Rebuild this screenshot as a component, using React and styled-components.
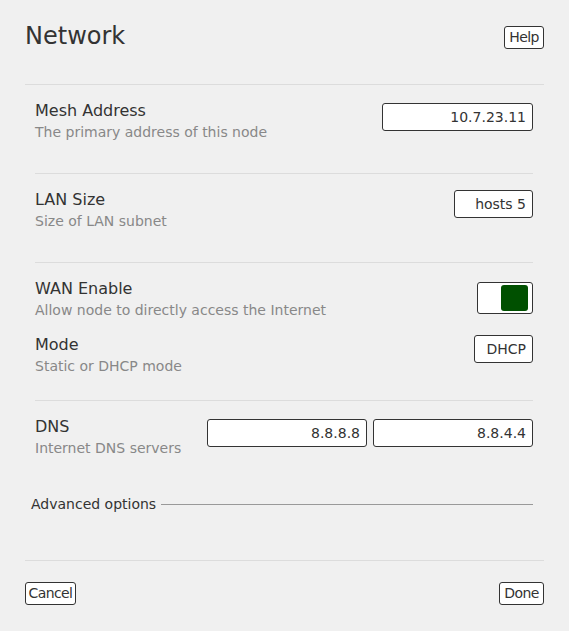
import styled, { createGlobalStyle } from "styled-components";

const GlobalStyle = createGlobalStyle`
  html, body {
    margin: 0;
    padding: 0;
    background: #f0f0f0;
  }
  body {
    font-family: "DejaVu Sans", "Liberation Sans", sans-serif;
    color: #333;
  }
`;

const Page = styled.div`
  padding: 22px 25px 0;
  min-height: 631px;
  box-sizing: border-box;
`;

const Header = styled.div`
  display: flex;
  justify-content: space-between;
  align-items: flex-start;
  padding-bottom: 34px;
  border-bottom: 1px solid #dcdcdc;
`;

const Title = styled.h1`
  margin: 0;
  font-size: 24px;
  line-height: 28px;
  font-weight: normal;
  color: #333;
`;

const Button = styled.button`
  font-family: "DejaVu Sans", sans-serif;
  font-size: 14px;
  letter-spacing: -0.6px;
  line-height: 21px;
  width: ${(p) => p.$w}px;
  height: 23px;
  color: #333;
  background: #fff;
  border: 1px solid #333;
  border-radius: 3px;
  padding: 0;
  text-align: center;
  margin-top: ${(p) => p.$offset || 0}px;
  cursor: pointer;
`;

const Section = styled.div`
  margin: 0 11px 0 10px;
  padding: 16px 0 ${(p) => p.$bottom ?? 32}px;
  border-bottom: ${(p) => (p.$last ? "none" : "1px solid #dcdcdc")};
  display: flex;
  flex-direction: column;
  gap: 16px;
`;

const Row = styled.div`
  display: flex;
  justify-content: space-between;
  align-items: flex-start;
  gap: 12px;
`;

const Info = styled.div`
  display: flex;
  flex-direction: column;
  gap: 2px;
`;

const Label = styled.div`
  font-size: 16px;
  line-height: 20px;
  color: #333;
`;

const Desc = styled.div`
  font-size: 14px;
  line-height: 18px;
  color: #888;
`;

const Inputs = styled.div`
  display: flex;
  gap: 6px;
  margin-top: 2px;
`;

const Input = styled.input`
  width: ${(p) => p.$width}px;
  height: 28px;
  box-sizing: border-box;
  border: 1px solid #333;
  border-radius: 3px;
  background: #fff;
  font-family: "DejaVu Sans", sans-serif;
  font-size: 14px;
  color: #333;
  text-align: right;
  padding: 0 6px;
  outline: none;
`;

const Select = styled.div`
  height: 28px;
  box-sizing: border-box;
  border: 1px solid #333;
  border-radius: 3px;
  background: #fff;
  font-size: 14px;
  line-height: 26px;
  color: #333;
  padding: 0 6px 0 ${(p) => p.$padLeft || 6}px;
`;

const Toggle = styled.div`
  width: 56px;
  height: 32px;
  box-sizing: border-box;
  margin-top: 3px;
  border: 1px solid #333;
  border-radius: 3px;
  background: #fff;
  padding: 2px 4px 2px 2px;
  display: flex;
  justify-content: ${(p) => (p.$on ? "flex-end" : "flex-start")};
`;

const Knob = styled.div`
  width: 27px;
  height: 26px;
  border-radius: 3px;
  background: #005000;
`;

const Advanced = styled.div`
  display: flex;
  align-items: center;
  gap: 5px;
  margin: 6px 11px 0 6px;
  font-size: 14px;
  line-height: 18px;
  color: #333;

  &::after {
    content: "";
    flex: 1;
    height: 1px;
    background: #999;
  }
`;

const Footer = styled.div`
  margin-top: 47px;
  padding-top: 21px;
  border-top: 1px solid #dcdcdc;
  display: flex;
  justify-content: space-between;
`;

export default function App() {
  return (
    <>
      <GlobalStyle />
      <Page>
        <Header>
          <Title>Network</Title>
          <Button $w={40} $offset={4}>Help</Button>
        </Header>

        <Section>
          <Row>
            <Info>
              <Label>Mesh Address</Label>
              <Desc>The primary address of this node</Desc>
            </Info>
            <Inputs>
              <Input $width={151} defaultValue="10.7.23.11" />
            </Inputs>
          </Row>
        </Section>

        <Section>
          <Row>
            <Info>
              <Label>LAN Size</Label>
              <Desc>Size of LAN subnet</Desc>
            </Info>
            <Select $padLeft={20}>hosts 5</Select>
          </Row>
        </Section>

        <Section $bottom={25}>
          <Row>
            <Info>
              <Label>WAN Enable</Label>
              <Desc>Allow node to directly access the Internet</Desc>
            </Info>
            <Toggle $on>
              <Knob />
            </Toggle>
          </Row>
          <Row>
            <Info>
              <Label>Mode</Label>
              <Desc>Static or DHCP mode</Desc>
            </Info>
            <Select $padLeft={11}>DHCP</Select>
          </Row>
        </Section>

        <Section $last>
          <Row>
            <Info>
              <Label>DNS</Label>
              <Desc>Internet DNS servers</Desc>
            </Info>
            <Inputs>
              <Input $width={160} defaultValue="8.8.8.8" />
              <Input $width={160} defaultValue="8.8.4.4" />
            </Inputs>
          </Row>
        </Section>

        <Advanced>Advanced options</Advanced>

        <Footer>
          <Button $w={51}>Cancel</Button>
          <Button $w={45}>Done</Button>
        </Footer>
      </Page>
    </>
  );
}
